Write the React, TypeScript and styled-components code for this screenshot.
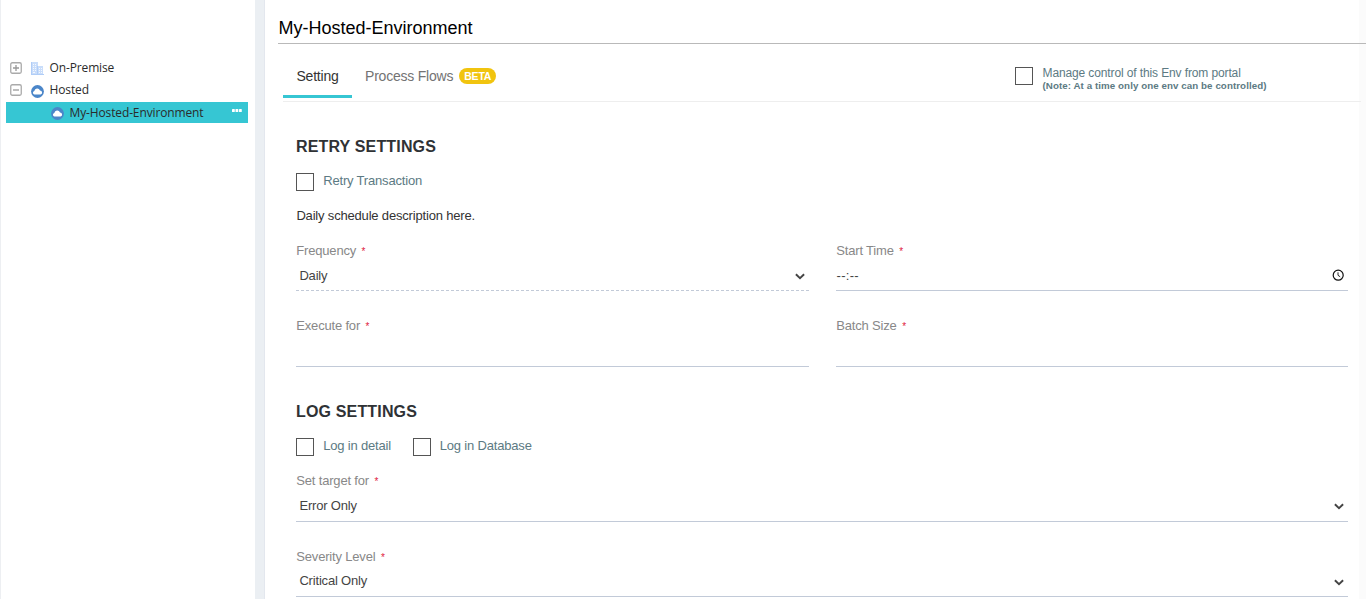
import React from "react";
import styled, { createGlobalStyle } from "styled-components";

const Global = createGlobalStyle`
  * { box-sizing: border-box; }
  body { margin: 0; background: #fff; overflow: hidden; }
  #root { font-family: "Liberation Sans", Arial, sans-serif; font-size: 13px; letter-spacing: -0.18px; }
`;

const Page = styled.div`
  display: flex;
  width: 100%;
  height: 599px;
  overflow: hidden;
`;

const Sidebar = styled.aside`
  width: 255px;
  flex: none;
  border-left: 1px solid #edeff2;
  padding: 57px 7px 0 5px;
`;

const Divider = styled.div`
  width: 10px;
  flex: none;
  background: #ebeff3;
  border-right: 1px solid #e3e7ee;
`;

const TreeRow = styled.div<{ $selected?: boolean; $h: number }>`
  display: flex;
  align-items: center;
  height: ${(p) => p.$h}px;
  margin-top: ${(p) => (p.$selected ? 1 : 0)}px;
  padding-left: ${(p) => (p.$selected ? 45 : 4)}px;
  padding-right: 6px;
  background: ${(p) => (p.$selected ? "#36c6d3" : "transparent")};
  svg { flex: none; }
`;

const TreeLabel = styled.span`
  font-family: "Open Sans", sans-serif;
  font-size: 12px;
  line-height: 20px;
  color: #2b2b2b;
  white-space: nowrap;
  margin-left: 5.5px;
  letter-spacing: -0.13px;
`;

const Expander = styled.span`
  display: flex;
  width: 21px;
`;

const IconSlot = styled.span`
  display: flex;
  padding-top: 2px;
`;

const More = styled.span`
  display: flex;
  margin: 0 0 5px auto;
`;

const Main = styled.main`
  flex: 1;
  min-width: 0;
  padding-left: 13px;
  background: linear-gradient(to right, transparent calc(100% - 7px), #fbfbfb calc(100% - 7px));
`;

const Title = styled.h1`
  margin: 0;
  height: 44px;
  padding: 17px 0 0 0.5px;
  font-size: 18px;
  line-height: 22px;
  font-weight: 400;
  letter-spacing: 0;
  color: #000;
  border-bottom: 1px solid #b9b9b9;
`;

const TabBar = styled.nav`
  display: flex;
  height: 58px;
  margin: 0 5px;
  border-bottom: 1px solid #eee;
`;

const Tab = styled.div<{ $active?: boolean }>`
  display: flex;
  align-items: center;
  height: 54px;
  padding: 12px 13px 0 13.5px;
  font-size: 14px;
  letter-spacing: -0.22px;
  color: ${(p) => (p.$active ? "#333" : "#737373")};
  border-bottom: 3px solid ${(p) => (p.$active ? "#36c6d3" : "transparent")};
`;

const Beta = styled.span`
  width: 37px;
  height: 16px;
  margin-left: 6px;
  border-radius: 8px;
  background: #f1c40f;
  color: #fff;
  font: 700 10.5px/16px "Liberation Sans", Arial, sans-serif;
  text-align: center;
`;

const Portal = styled.div`
  width: 346px;
  margin-left: auto;
  padding-top: 23px;
`;

const PortalText = styled.span`
  margin: -2px 0 0 0.5px;
  font-size: 12px;
  letter-spacing: -0.12px;
`;

const Note = styled.small`
  display: block;
  margin-top: -1px;
  font-size: 9.75px;
  line-height: 11px;
  font-weight: 700;
  letter-spacing: 0.07px;
`;

const Check = styled.label`
  display: flex;
  color: #5c7a83;
  line-height: 16px;
  white-space: nowrap;
`;

const Box = styled.span`
  flex: none;
  width: 18px;
  height: 18px;
  margin-right: 9px;
  border: 1px solid #555;
`;

const CheckText = styled.span`
  margin-left: 0.2px;
`;

const Form = styled.div`
  padding: 35px 18px 0;
`;

const Heading = styled.h2<{ $h: number }>`
  margin: 0;
  height: ${(p) => p.$h}px;
  font-size: 16px;
  line-height: 20px;
  font-weight: 700;
  letter-spacing: 0.16px;
  color: #2f3235;
`;

const Checks = styled.div`
  display: flex;
  gap: 21.6px;
  height: 34px;
`;

const Description = styled.p`
  margin: 0;
  height: 35px;
  padding-left: 0.4px;
  line-height: 17px;
  color: #333;
`;

const Grid = styled.div`
  display: grid;
  grid-template-columns: 513px 512px;
  column-gap: 27px;
`;

const Field = styled.div<{ $h: number }>`
  height: ${(p) => p.$h}px;
`;

const Label = styled.div`
  display: flex;
  height: 17px;
  padding-left: 0.3px;
  line-height: 17px;
  color: #888;
`;

const Star = styled.span`
  margin-left: 5.5px;
  color: #e02240;
  font-size: 10px;
  line-height: 19px;
`;

const Control = styled.div<{ $dashed?: boolean; $h: number; $indent?: number; $top?: number; $ls?: number }>`
  display: flex;
  justify-content: space-between;
  height: ${(p) => p.$h}px;
  padding: ${(p) => p.$top ?? 8}px 4px 0 ${(p) => p.$indent ?? 3.4}px;
  line-height: 17px;
  letter-spacing: ${(p) => p.$ls ?? -0.18}px;
  color: #444;
  border-bottom: 1px ${(p) => (p.$dashed ? "dashed" : "solid")} #c2cad8;
`;

const IndicatorSlot = styled.span<{ $top: number }>`
  display: flex;
  flex: none;
  padding-top: ${(p) => p.$top}px;
`;

const Expand = ({ plus }: { plus?: boolean }) => (
  <Expander>
    <svg width="12" height="12" viewBox="0 0 12 12" fill="none" stroke="#aaa">
      <rect x=".75" y=".75" width="10.5" height="10.5" rx="1.5" strokeWidth="1.3" />
      <path d={plus ? "M3 6h6M6 3v6" : "M3 6h6"} stroke="#999" strokeWidth="1.3" />
    </svg>
  </Expander>
);

const Cloud = () => (
  <svg width="13" height="13" viewBox="0 0 13 13">
    <circle cx="6.5" cy="6.5" r="6.4" fill="#4b86c9" />
    <path d="M3.5 9.6a1.9 1.9 0 0 1-.2-3.7 3 3 0 0 1 5.7-.5 2.15 2.15 0 0 1 .6 4.2z" fill="#fff" />
  </svg>
);

const Building = () => (
  <svg width="13" height="13" viewBox="0 0 13 13">
    <path d="M0 0h7v4h5v8h1v1H0z" fill="#c9ddfa" />
    <path d="M2 2.5h1M4 2.5h1M2 4.5h1M4 4.5h1M2 6.5h1M4 6.5h1M2 8.5h1M4 8.5h1M8 6.5h1M10 6.5h1M8 8.5h1M10 8.5h1M8 10.5h1M10 10.5h1M2 10.5h2" stroke="#f4f8fe" />
    <path d="M.5 0v13M6.5 4v8M0 12.5h13" stroke="#b0cdf7" fill="none" />
  </svg>
);

const Dots = () => (
  <More>
    <svg width="10" height="3" viewBox="0 0 10 3" fill="#fff">
      <rect x="0" width="2.8" height="3" rx=".6" />
      <rect x="3.5" width="2.8" height="3" rx=".6" />
      <rect x="7" width="2.8" height="3" rx=".6" />
    </svg>
  </More>
);

const Chevron = ({ top = 6 }: { top?: number }) => (
  <IndicatorSlot $top={top}>
    <svg width="10" height="7" viewBox="0 0 10 7" fill="none" stroke="#444" strokeWidth="1.9">
      <path d="M.9 1.2 5 5.1l4.1-3.9" />
    </svg>
  </IndicatorSlot>
);

const Clock = () => (
  <IndicatorSlot $top={2}>
    <svg width="12" height="12" viewBox="0 0 12 12" fill="none" stroke="#111">
      <circle cx="6.2" cy="6.2" r="5" strokeWidth="1.2" />
      <path d="M6 3.3v3l2.2 1.5" strokeWidth=".9" />
    </svg>
  </IndicatorSlot>
);

const FieldLabel = ({ children }: { children: React.ReactNode }) => (
  <Label>{children}<Star>*</Star></Label>
);

export default function App() {
  return (
    <>
      <Global />
      <Page>
        <Sidebar>
          <TreeRow $h={22}><Expand plus /><Building /><TreeLabel>On-Premise</TreeLabel></TreeRow>
          <TreeRow $h={22}><Expand /><IconSlot><Cloud /></IconSlot><TreeLabel>Hosted</TreeLabel></TreeRow>
          <TreeRow $h={21} $selected>
            <IconSlot><Cloud /></IconSlot><TreeLabel>My-Hosted-Environment</TreeLabel>
            <Dots />
          </TreeRow>
        </Sidebar>
        <Divider />
        <Main>
          <Title>My-Hosted-Environment</Title>
          <TabBar>
            <Tab $active>Setting</Tab>
            <Tab>Process Flows<Beta>BETA</Beta></Tab>
            <Portal>
              <Check>
                <Box />
                <PortalText>Manage control of this Env from portal<Note>(Note: At a time only one env can be controlled)</Note></PortalText>
              </Check>
            </Portal>
          </TabBar>
          <Form>
            <Heading $h={36}>RETRY SETTINGS</Heading>
            <Checks>
              <Check><Box /><CheckText>Retry Transaction</CheckText></Check>
            </Checks>
            <Description>Daily schedule description here.</Description>
            <Grid>
              <Field $h={75}>
                <FieldLabel>Frequency</FieldLabel>
                <Control $h={32} $dashed>Daily<Chevron /></Control>
              </Field>
              <Field $h={75}>
                <FieldLabel>Start Time</FieldLabel>
                <Control $h={32} $indent={0.5} $ls={0.3}>--:--<Clock /></Control>
              </Field>
              <Field $h={85}>
                <FieldLabel>Execute for</FieldLabel>
                <Control $h={33} />
              </Field>
              <Field $h={85}>
                <FieldLabel>Batch Size</FieldLabel>
                <Control $h={33} />
              </Field>
            </Grid>
            <Heading $h={36}>LOG SETTINGS</Heading>
            <Checks>
              <Check><Box /><CheckText>Log in detail</CheckText></Check>
              <Check><Box /><CheckText>Log in Database</CheckText></Check>
            </Checks>
            <Field $h={76}>
              <FieldLabel>Set target for</FieldLabel>
              <Control $h={33}>Error Only<Chevron /></Control>
            </Field>
            <Field $h={76}>
              <FieldLabel>Severity Level</FieldLabel>
              <Control $h={32} $top={7}>Critical Only<Chevron top={7} /></Control>
            </Field>
          </Form>
        </Main>
      </Page>
    </>
  );
}
